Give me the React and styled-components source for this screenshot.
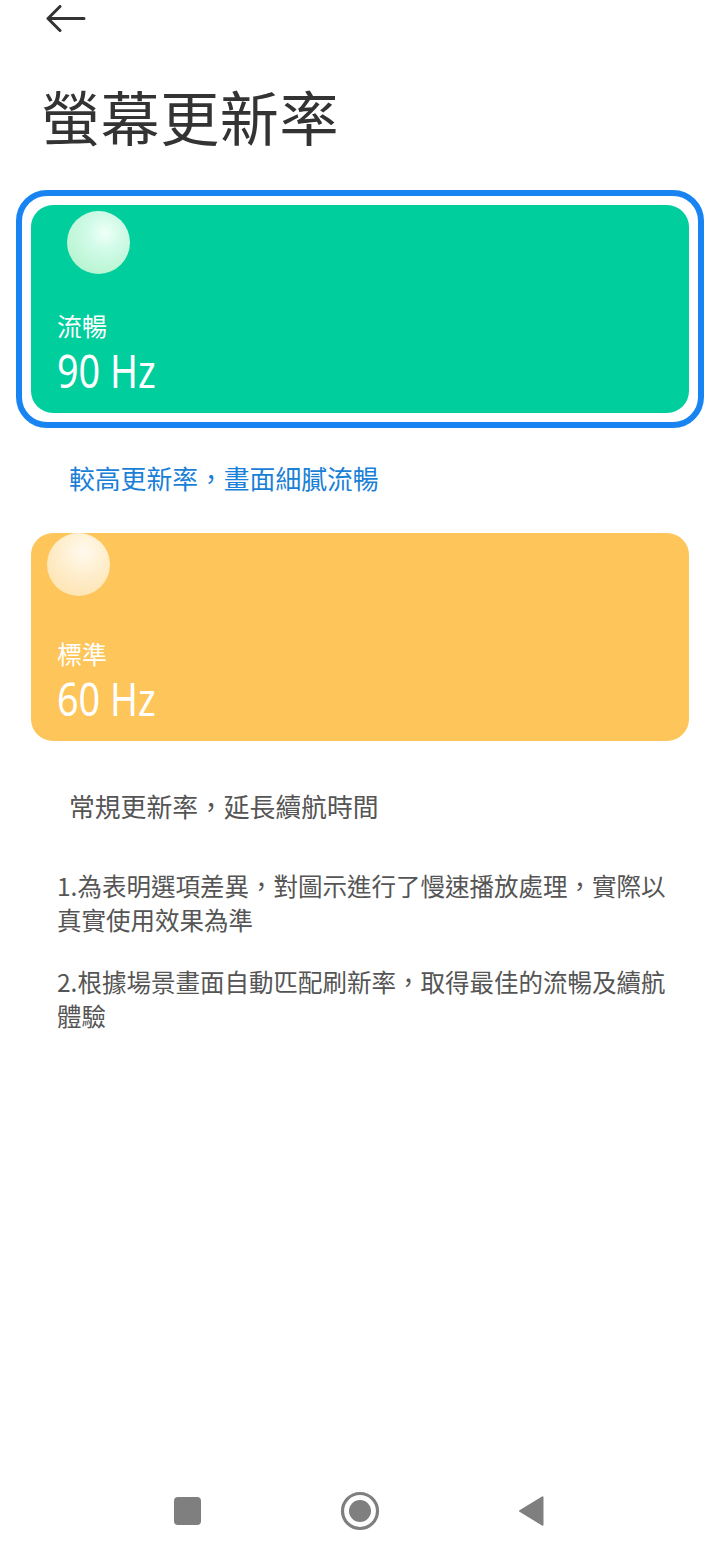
import React from "react";
import styled, { createGlobalStyle } from "styled-components";

const GlobalStyle = createGlobalStyle`
  html, body { margin: 0; padding: 0; background: #ffffff; }
  body { font-family: "Noto Sans", "Noto Sans CJK TC", sans-serif; -webkit-font-smoothing: antialiased; }
  * { box-sizing: border-box; }
`;

const Page = styled.div`
  min-height: 1543px;
  display: flex;
  flex-direction: column;
  background: #fff;
  font-family: "Noto Sans", "Noto Sans CJK TC", sans-serif;
`;

const Header = styled.div`
  height: 40px;
  padding: 5px 0 0 45px;
`;

const BackButton = styled.button`
  border: 0;
  background: none;
  padding: 0;
  width: 42px;
  height: 28px;
  display: flex;
  align-items: center;
  cursor: pointer;
`;

const Title = styled.h1`
  margin: 46px 0 0 41px;
  font-family: "Noto Sans CJK TC", sans-serif;
  font-weight: 400;
  font-size: 59px;
  line-height: 1;
  color: #333333;
  letter-spacing: 0.6px;
`;

const Options = styled.div`
  display: flex;
  flex-direction: column;
  margin-top: 45px;
`;

const OptionFrame = styled.div`
  margin: 0 16px;
  border: 6px solid ${(p) => (p.$selected ? "#1784f2" : "transparent")};
  border-radius: 31px;
  padding: 9px;
`;

const Card = styled.div`
  position: relative;
  overflow: hidden;
  height: 208px;
  border-radius: 22px;
  background: ${(p) => p.$color};
  padding: 108px 0 0 26px;
  display: flex;
  flex-direction: column;
`;

const Bubble = styled.div`
  position: absolute;
  width: 63px;
  height: 63px;
  border-radius: 50%;
  background: ${(p) => p.$gradient};
`;

const CardLabel = styled.div`
  font-family: "Noto Sans CJK TC", sans-serif;
  font-size: 25px;
  line-height: 1;
  color: #ffffff;
`;

const CardRate = styled.div`
  margin-top: 9px;
  font-family: "Noto Sans", sans-serif;
  font-size: 46px;
  line-height: 1;
  color: #ffffff;
  transform: scaleX(0.82);
  transform-origin: left center;
  white-space: nowrap;
`;

const Description = styled.div`
  padding: 37px 0 27px 69px;
  font-family: "Noto Sans CJK TC", sans-serif;
  font-size: 25.8px;
  line-height: 1;
  color: ${(p) => (p.$active ? "#1a7fd6" : "#555555")};
`;

const Notes = styled.div`
  margin-top: 23px;
  padding: 0 38px 0 57px;
  display: flex;
  flex-direction: column;
  gap: 28px;
`;

const Note = styled.p`
  margin: 0;
  font-family: "Noto Sans CJK TC", sans-serif;
  font-size: 24.5px;
  line-height: 34px;
  color: #555555;
`;

const NavBar = styled.nav`
  margin-top: auto;
  height: 64px;
  display: flex;
  justify-content: center;
  align-items: center;
  gap: 113px;
`;

const NavItem = styled.div`
  width: 60px;
  height: 60px;
  display: flex;
  align-items: center;
  justify-content: center;
`;

const SquareKey = styled.div`
  width: 27px;
  height: 28px;
  border-radius: 4px;
  background: #7f7f7f;
`;

const greenBubble =
  "radial-gradient(circle at 60% 35%, #f0fff8 0%, #d2fbe9 30%, #b9f5d2 75%, #aef0c8 100%)";
const yellowBubble =
  "radial-gradient(circle at 58% 30%, #fffaf0 0%, #fff0d2 35%, #fde4b3 80%, #fbdca4 100%)";

const options = [
  {
    key: "smooth",
    label: "流暢",
    rate: "90 Hz",
    color: "#00ce9d",
    bubble: greenBubble,
    bubblePos: { left: 36, top: 6 },
    selected: true,
    desc: "較高更新率，畫面細膩流暢",
  },
  {
    key: "standard",
    label: "標準",
    rate: "60 Hz",
    color: "#fdc55a",
    bubble: yellowBubble,
    bubblePos: { left: 16, top: 0 },
    selected: false,
    desc: "常規更新率，延長續航時間",
  },
];

export default function App() {
  return (
    <Page>
      <GlobalStyle />
      <Header>
        <BackButton aria-label="返回">
          <svg width="42" height="28" viewBox="0 0 42 28" fill="none">
            <path
              d="M39 13.5H3M15 1.5L3 13.5L15 25.5"
              stroke="#333333"
              strokeWidth="3"
              strokeLinecap="round"
              strokeLinejoin="round"
            />
          </svg>
        </BackButton>
      </Header>
      <Title>螢幕更新率</Title>
      <Options>
        {options.map((o) => (
          <React.Fragment key={o.key}>
            <OptionFrame $selected={o.selected}>
              <Card $color={o.color}>
                <Bubble
                  $gradient={o.bubble}
                  style={{ left: o.bubblePos.left, top: o.bubblePos.top }}
                />
                <CardLabel>{o.label}</CardLabel>
                <CardRate>{o.rate}</CardRate>
              </Card>
            </OptionFrame>
            <Description $active={o.selected}>{o.desc}</Description>
          </React.Fragment>
        ))}
      </Options>
      <Notes>
        <Note>1.為表明選項差異，對圖示進行了慢速播放處理，實際以真實使用效果為準</Note>
        <Note>2.根據場景畫面自動匹配刷新率，取得最佳的流暢及續航體驗</Note>
      </Notes>
      <NavBar>
        <NavItem>
          <SquareKey />
        </NavItem>
        <NavItem>
          <svg width="40" height="40" viewBox="0 0 40 40">
            <circle cx="20" cy="20" r="17.5" fill="none" stroke="#7f7f7f" strokeWidth="3.2" />
            <circle cx="20" cy="20" r="11" fill="#7f7f7f" />
          </svg>
        </NavItem>
        <NavItem>
          <svg width="34" height="34" viewBox="0 0 34 34">
            <path
              d="M26 2.5 L3.5 16.2 Q2.5 17 3.5 17.8 L26 31.5 Q27.5 32.3 27.5 30.5 L27.5 3.5 Q27.5 1.7 26 2.5 Z"
              fill="#7f7f7f"
            />
          </svg>
        </NavItem>
      </NavBar>
    </Page>
  );
}
